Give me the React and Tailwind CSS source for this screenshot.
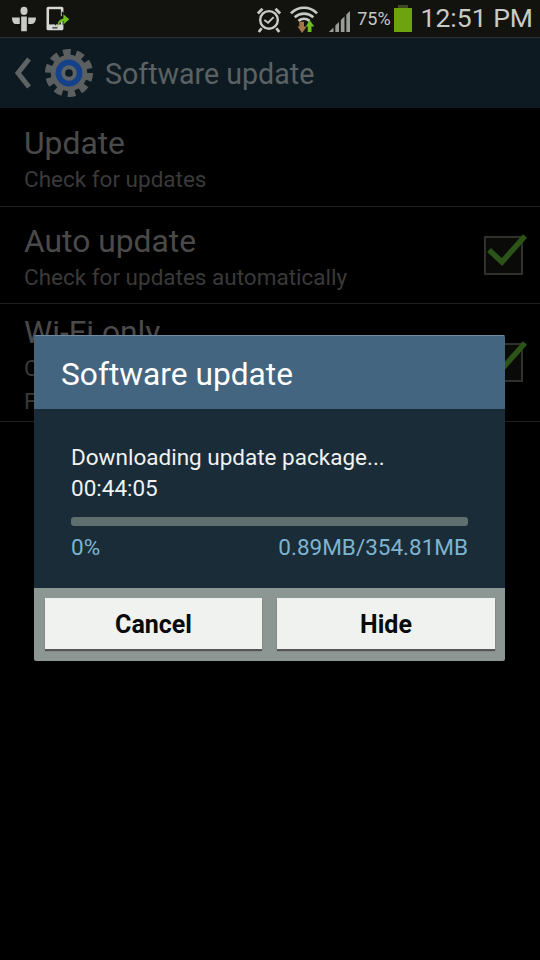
function SettingRow({ title, lines, checked, className }) {
  return (
    <div className={`flex items-center justify-between border-b border-[#1f1f1f] pl-6 pr-[17px] ${className}`}>
      <div className="pt-[4px]">
        <p className="text-[31.8px] leading-[36px] text-[#4a4a4a]">{title}</p>
        {lines.map((line) => (
          <p key={line} className="mt-[3px] text-[22.5px] leading-[30px] text-[#3a3a3a]">{line}</p>
        ))}
      </div>
      {checked && (
        <div className="relative h-[39px] w-[39px] border-2 border-[#2f312d] bg-[#0a0b09]">
          <svg width="44" height="36" viewBox="0 0 44 36" className="absolute -top-[2px] left-0 overflow-visible">
            <path d="M3 14l13 12 23-26" fill="none" stroke="#2d5418" strokeWidth="5.5" />
          </svg>
        </div>
      )}
    </div>
  );
}

function StatusIcons() {
  return (
    <div className="flex items-center">
      <svg width="24" height="26" viewBox="0 0 34 32" preserveAspectRatio="none" className="ml-3">
        <circle cx="17" cy="6" r="5" fill="#c8cac6" />
        <path d="M0 14h11v8H5c-3 0-5-3-5-8zM13 13h8v18h-8zM23 14h11c0 4-2 8-6 8h-5z" fill="#c8cac6" />
      </svg>
      <svg width="27" height="27" viewBox="0 0 32 32" className="ml-[8px]">
        <rect x="3" y="2" width="20" height="28" rx="2" fill="#d6d8d3" />
        <rect x="6" y="5" width="14" height="18" fill="#12130f" />
        <rect x="10" y="26" width="6" height="2" fill="#555" />
        <path d="M13 25c0-7 3-11 8-12V7l10 9-9 8v-5c-4 0-7 2-9 6z" fill="#12130f" />
        <path d="M16 26c0-6 2-9 7-10v-5l7 6-7 6v-4c-3 0-5 3-7 7z" fill="#6fc01f" />
      </svg>
    </div>
  );
}

function SystemIcons() {
  return (
    <div className="flex items-center">
      <svg width="26" height="28" viewBox="0 0 28 30">
        <circle cx="14" cy="16" r="9.5" fill="none" stroke="#c8cac6" strokeWidth="2.6" />
        <path d="M9 16l4 3 6-6" fill="none" stroke="#c8cac6" strokeWidth="2" />
        <path d="M2 9l5-5M26 9l-5-5M6 25l-3 4M22 25l3 4" stroke="#c8cac6" strokeWidth="3" />
      </svg>
      <svg width="28" height="28" viewBox="0 0 30 30" className="ml-[8px]">
        <path d="M1 9c8-8 20-8 28 0M5 13c6-5 14-5 20 0M9 17c4-3 8-3 12 0" fill="none" stroke="#c8cac6" strokeWidth="2.8" />
        <path d="M10 18h5v5h3l-5 7-5-7h2z" fill="#a5764a" />
        <path d="M17 23l4-7 5 7h-3v6h-4v-6z" fill="#6fc01f" />
      </svg>
      <svg width="22" height="24" viewBox="0 0 24 26" className="ml-[10px] mt-[4px]">
        <path d="M1 25l5-5v5zM8 18l4-4v11h-4zM14 12l4-4v17h-4zM20 6l4-4v23h-4z" fill="#9a9c98" />
      </svg>
      <span className="ml-[7px] text-[18px] leading-none text-[#c4c6c2]">75%</span>
      <div className="ml-[3px] flex flex-col items-center">
        <div className="h-[3px] w-[10px] bg-[#3f4a22]" />
        <div className="h-[24px] w-[18px] bg-[#6da30f]" />
      </div>
      <span className="ml-[9px] text-[26.5px] leading-none text-[#c8cac6]">12:51 PM</span>
    </div>
  );
}

export default function App() {
  return (
    <div className="relative h-[960px] w-[540px] overflow-hidden bg-black font-['Roboto',sans-serif]">

      {/* Status bar */}
      <div className="flex h-[38px] items-center justify-between border-b border-[#2a3034] bg-[#12130f] pr-[7px]">
        <StatusIcons />
        <SystemIcons />
      </div>

      {/* Action bar */}
      <div className="flex h-[70px] items-center bg-[#0e1a22]">
        <svg width="16" height="32" viewBox="0 0 16 32" className="ml-[15px]">
          <path d="M14 2L3 16l11 14" fill="none" stroke="#5e6363" strokeWidth="5" />
        </svg>
        <svg width="48" height="48" viewBox="0 0 50 50" className="ml-[14px]">
          <circle cx="25" cy="25" r="21" fill="none" stroke="#5c5f5f" strokeWidth="8" strokeDasharray="7.7 5.5" />
          <circle cx="25" cy="25" r="19" fill="#5c5f5f" />
          <circle cx="25" cy="25" r="14" fill="#14418a" />
          <circle cx="25" cy="25" r="8" fill="#5c6468" />
          <circle cx="25" cy="25" r="4" fill="#0e1a22" />
        </svg>
        <span className="ml-[12px] mt-[3px] text-[28.6px] text-[#5b6263]">Software update</span>
      </div>

      {/* Settings list */}
      <SettingRow title="Update" lines={["Check for updates"]} className="h-[99px]" />
      <SettingRow title="Auto update" lines={["Check for updates automatically"]} checked className="h-[97px]" />
      <SettingRow title="Wi-Fi only" lines={["Check for updates using Wi-Fi", "For details"]} checked className="h-[118px]" />

      {/* Download dialog */}
      <div className="absolute left-[34px] top-[335px] w-[471px] overflow-hidden rounded-[2px]">
        <div className="flex h-[74px] items-center border-t border-[#6f8ba0] bg-[#44657f] pl-[27px] pt-[5px]">
          <span className="text-[31.7px] text-white">Software update</span>
        </div>
        <div className="h-[179px] bg-[#1a2c38] px-[37px] pt-[33px]">
          <p className="text-[22.5px] leading-[31px] text-[#f0f2f0]">Downloading update package...</p>
          <p className="text-[22.5px] leading-[31px] text-[#f0f2f0]">00:44:05</p>
          <div className="mt-[13px] h-[9px] rounded-[3px] bg-[#5f6f6e]" />
          <div className="mt-[7px] flex justify-between text-[22.5px] leading-[28px] text-[#7db4d0]">
            <span>0%</span>
            <span>0.89MB/354.81MB</span>
          </div>
        </div>
        <div className="flex h-[73px] gap-[15px] bg-[#8c9794] pl-[11px] pr-[10px] pt-[10px]">
          <button className="h-[51px] w-[217px] bg-[#eff2ee] pt-[2px] text-[25px] font-bold text-[#0a0a0a] shadow-[0_2px_1px_#555]">Cancel</button>
          <button className="h-[51px] w-[218px] bg-[#eff2ee] pt-[2px] text-[25px] font-bold text-[#0a0a0a] shadow-[0_2px_1px_#555]">Hide</button>
        </div>
      </div>
    </div>
  );
}
